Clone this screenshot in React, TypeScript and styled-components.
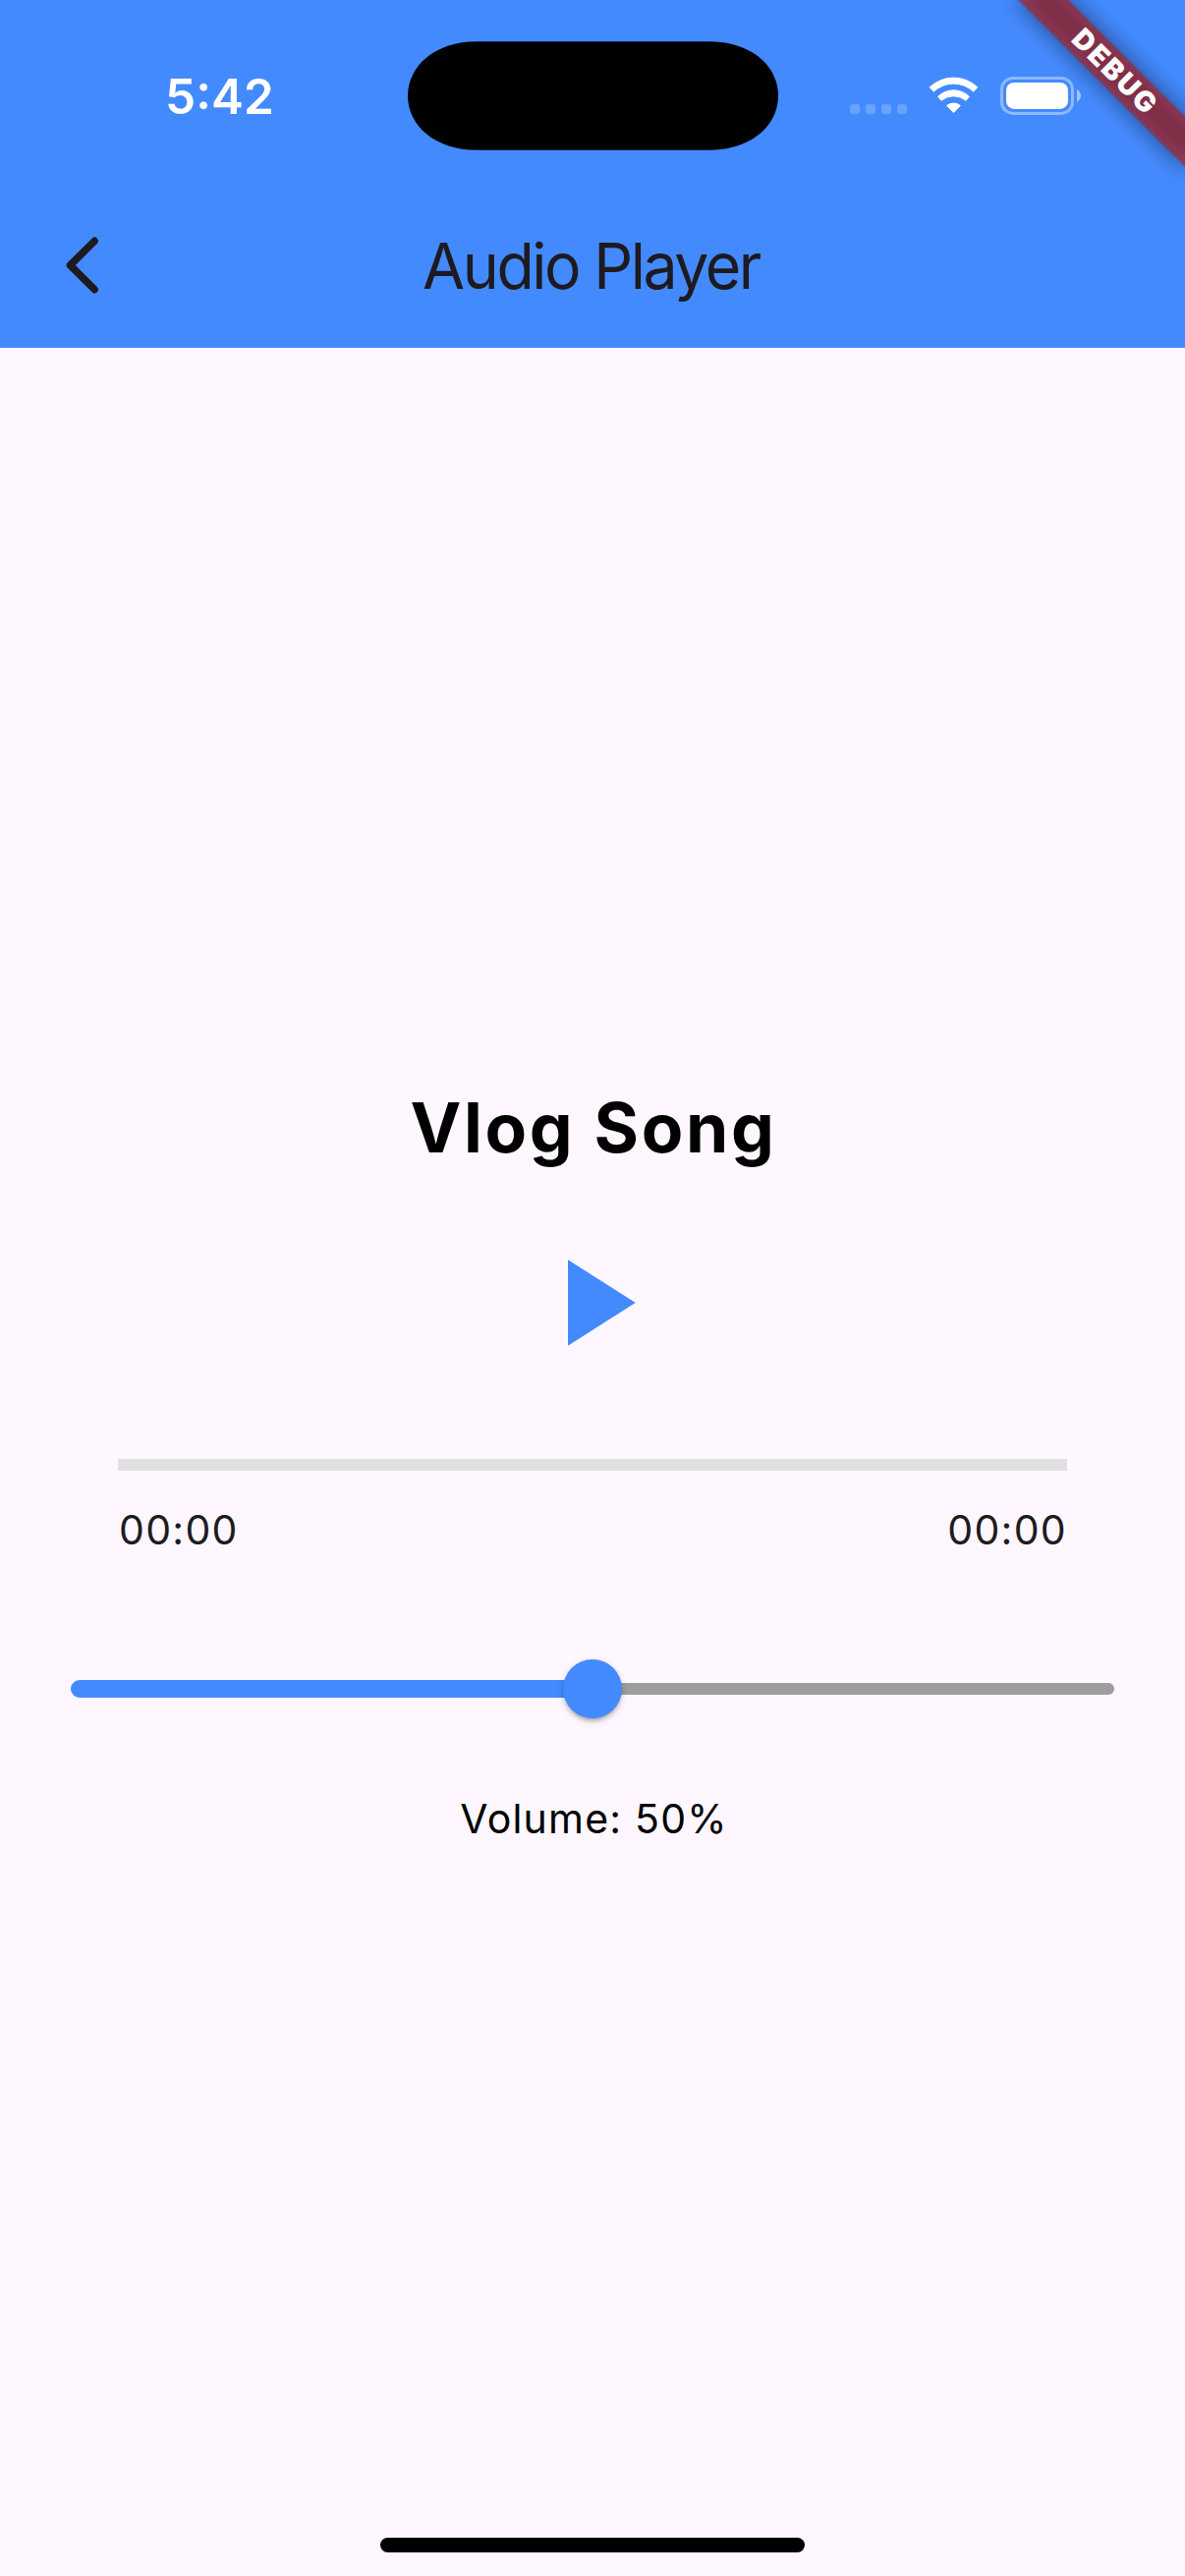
import React, { useState } from "react";
import styled, { createGlobalStyle } from "styled-components";

const BLUE = "#448aff";
const INK = "#1d1b20";

const GlobalStyle = createGlobalStyle`
  *, *::before, *::after { box-sizing: border-box; }
  body {
    margin: 0;
    background: #fef7ff;
    font-family: Inter, "Liberation Sans", sans-serif;
  }
  button {
    border: 0;
    padding: 0;
    background: none;
    cursor: pointer;
  }
  svg { display: block; }
`;

const Screen = styled.div`
  position: relative;
  display: flex;
  flex-direction: column;
  width: 1206px;
  height: 2622px;
  overflow: hidden;
  background: #fef7ff;
`;

const Header = styled.header`
  display: flex;
  flex-direction: column;
  height: 354px;
  background: ${BLUE};
`;

const StatusBar = styled.div`
  display: grid;
  grid-template-columns: 1fr 377px 1fr;
  align-items: center;
  height: 186px;
  padding-top: 8px;
`;

const Clock = styled.time`
  padding: 2px 0 0 168px;
  color: #fff;
  font-size: 49.5px;
  font-weight: 600;
  line-height: 60px;
`;

const StatusIcons = styled.div`
  display: flex;
  align-items: center;
  justify-content: flex-end;
  padding-right: 105px;
`;

const SignalDots = styled.div`
  display: flex;
  gap: 6px;
  padding-top: 28px;
  margin-right: 22px;
`;

const SignalDot = styled.span`
  width: 10px;
  height: 10px;
  border-radius: 3px;
  background: rgba(255, 255, 255, 0.2);
`;

const WifiIcon = styled.svg`
  width: 51px;
  height: 38px;
  margin-right: 21px;
`;

const BatteryIcon = styled.svg`
  width: 84px;
  height: 40px;
`;

const Toolbar = styled.div`
  display: grid;
  grid-template-columns: 168px 1fr 168px;
  align-items: center;
  height: 168px;
`;

const BackButton = styled.button`
  display: flex;
  justify-content: center;
  width: 168px;
`;

const Title = styled.h1`
  margin: 0;
  padding: 2px 3px 0 0;
  color: ${INK};
  font-size: 64.5px;
  font-weight: 400;
  line-height: 80px;
  letter-spacing: -2.5px;
  text-align: center;
  white-space: nowrap;
  transform: scaleX(0.97);
`;

const Player = styled.main`
  display: flex;
  flex: 1;
  flex-direction: column;
  align-items: center;
  padding-top: 752px;
`;

const SongTitle = styled.h2`
  margin: 0;
  padding-left: 2px;
  color: #000;
  font-size: 69.5px;
  font-weight: 700;
  line-height: 84px;
  letter-spacing: 2.66px;
`;

const PlayButton = styled.button`
  width: 150px;
  height: 150px;
  margin-top: 61px;
`;

const Progress = styled.div`
  width: 966px;
  height: 12px;
  margin-top: 84px;
  background: #e0e0e0;
`;

const Times = styled.div`
  display: flex;
  justify-content: space-between;
  width: 966px;
  margin-top: 35px;
  padding-left: 1px;
`;

const TimeLabel = styled.span`
  color: ${INK};
  font-size: 41px;
  font-weight: 370;
  line-height: 50px;
  letter-spacing: 1.3px;
`;

const Slider = styled.div`
  display: flex;
  align-items: center;
  width: 1062px;
  height: 60px;
  margin-top: 107px;
`;

const ActiveTrack = styled.div`
  height: 18px;
  border-radius: 9px 0 0 9px;
  background: ${BLUE};
`;

const InactiveTrack = styled.div`
  flex: 1;
  height: 12px;
  border-radius: 0 6px 6px 0;
  background: #9e9e9e;
`;

const Thumb = styled.div`
  position: relative;
  flex: none;
  width: 60px;
  height: 60px;
  margin: 0 -30px;
  border-radius: 50%;
  background: ${BLUE};
  box-shadow:
    0 5px 4px -3px rgba(0, 0, 0, 0.18),
    0 2px 4px rgba(0, 0, 0, 0.13),
    0 3px 9px rgba(0, 0, 0, 0.12);
`;

const VolumeLabel = styled.p`
  margin: 77px 0 0;
  padding-left: 3px;
  color: #000;
  font-size: 41px;
  font-weight: 370;
  line-height: 50px;
  letter-spacing: 1.2px;
`;

const HomeBar = styled.div`
  width: 432px;
  height: 15px;
  margin: 0 auto 24px;
  border-radius: 7.5px;
  background: #000;
`;

/* Diagonal ribbon laid over the top right corner of the screen. */
const RibbonAnchor = styled.div`
  position: absolute;
  top: 0;
  left: 1206px;
  width: 0;
  height: 0;
  transform: rotate(45deg);
`;

const RibbonBand = styled.div`
  position: absolute;
  top: 84px;
  left: -120px;
  width: 240px;
  height: 36px;
`;

const RibbonShadow = styled(RibbonBand)`
  background: rgba(0, 0, 0, 0.5);
  filter: blur(11.9px);
`;

const Ribbon = styled(RibbonBand)`
  padding-left: 3px;
  background: rgba(183, 28, 28, 0.627);
  color: #fff;
  font-size: 28.6px;
  font-weight: 900;
  line-height: 35px;
  letter-spacing: 2.1px;
  text-align: center;
`;

const Island = () => (
  <svg width="377" height="111" viewBox="0 0 377 111">
    <path
      d="M70 .25H307C349 .25 377 25 377 55.5S349 110.75 307 110.75H70C28 110.75 0 86 0 55.5S28 .25 70 .25Z"
      fill="#000"
    />
  </svg>
);

const Wifi = () => (
  <WifiIcon viewBox="-1 -1.5 153 114">
    <g fill="#fff" stroke="#fff" strokeWidth="3" strokeLinejoin="round">
      <path d="M2.5 31A106 106 0 0 1 148.5 31L136 44A88 88 0 0 0 15 44Z" />
      <path d="M28 59.5A67.5 67.5 0 0 1 123 59.5L113 71.5A59 59 0 0 0 38 71.5Z" />
      <path d="M55 87A32 32 0 0 1 96 87L75.5 108.5Z" />
    </g>
  </WifiIcon>
);

const Battery = () => (
  <BatteryIcon viewBox="0 0 84 40">
    <rect x="2.5" y="2.4" width="72" height="36" rx="11.5" fill="none" stroke="#fff" strokeOpacity="0.4" strokeWidth="3" />
    <rect x="7" y="6.9" width="63" height="27" rx="8" fill="#fff" />
    <path d="M79 14.3V26.7C81.4 25.7 83 23.3 83 20.5S81.4 15.3 79 14.3Z" fill="#fff" fillOpacity="0.5" />
  </BatteryIcon>
);

export default function App() {
  const [volume] = useState(50);

  return (
    <>
      <GlobalStyle />
      <Screen>
        <Header>
          <StatusBar>
            <Clock>5:42</Clock>
            <Island />
            <StatusIcons>
              <SignalDots>
                {[0, 1, 2, 3].map((n) => (
                  <SignalDot key={n} />
                ))}
              </SignalDots>
              <Wifi />
              <Battery />
            </StatusIcons>
          </StatusBar>
          <Toolbar>
            <BackButton aria-label="Back">
              <svg width="36" height="60" viewBox="0 0 36 60">
                <path d="M30.2 5.3L5.4 30L30.2 54.7" fill="none" stroke={INK} strokeWidth="7.5" strokeLinecap="round" strokeLinejoin="round" />
              </svg>
            </BackButton>
            <Title>Audio Player</Title>
          </Toolbar>
        </Header>

        <Player>
          <SongTitle>Vlog Song</SongTitle>
          <PlayButton aria-label="Play">
            <svg width="150" height="150" viewBox="0 0 24 24">
              <path d="M8 5v14l11-7z" fill={BLUE} />
            </svg>
          </PlayButton>
          <Progress />
          <Times>
            <TimeLabel>00:00</TimeLabel>
            <TimeLabel>00:00</TimeLabel>
          </Times>
          <Slider>
            <ActiveTrack style={{ width: `${volume}%` }} />
            <Thumb />
            <InactiveTrack />
          </Slider>
          <VolumeLabel>Volume: {volume}%</VolumeLabel>
        </Player>
        <HomeBar />

        <RibbonAnchor>
          <RibbonShadow />
          <Ribbon>DEBUG</Ribbon>
        </RibbonAnchor>
      </Screen>
    </>
  );
}
